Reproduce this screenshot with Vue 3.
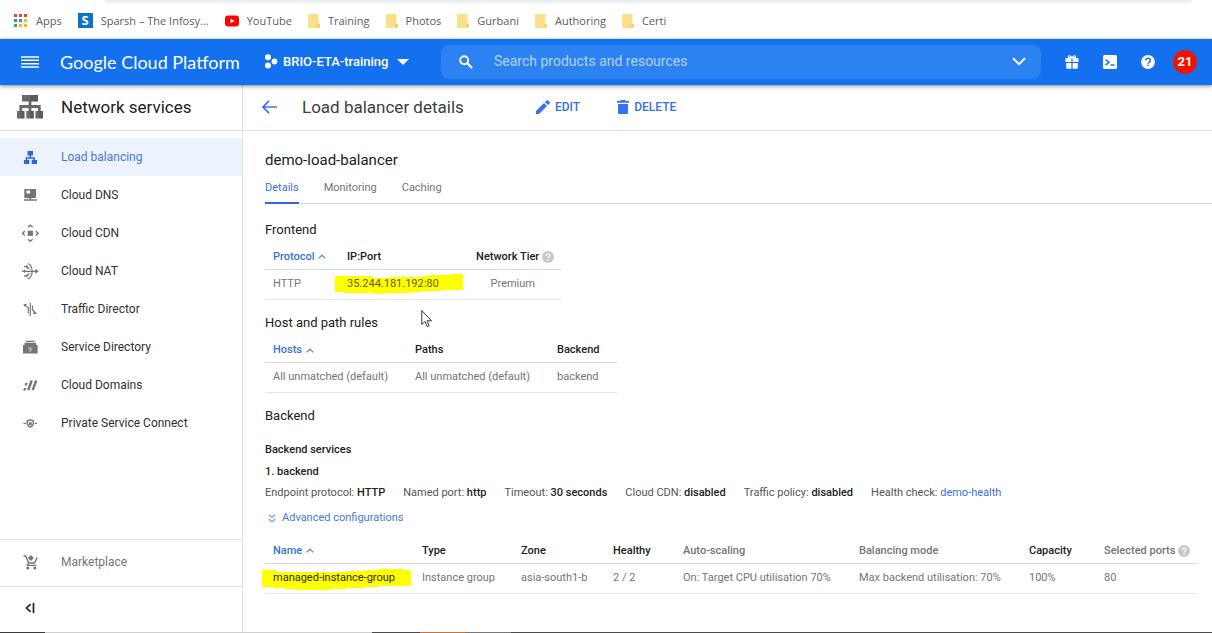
<script setup>
const bookmarks = [
  { label: 'Training' },
  { label: 'Photos' },
  { label: 'Gurbani' },
  { label: 'Authoring' },
  { label: 'Certi' },
]

const services = [
  {
    label: 'Load balancing',
    active: true,
    fill: 'M6.5 3h5.5v4.5H6.5z M3 12h5.3v4H3z M10.7 12H16v4h-5.300z',
    stroke: 'M9.300 7v3 M5.500 12.500V10h7.600v2.500',
    width: 1.6,
  },
  {
    label: 'Cloud DNS',
    fill: 'M3.300 3H15v9H3.300z M5.500 4.500v3h3.600v-3z M8 12h2.300v1.500H8z M3 13.300h13v1.500H3z',
    stroke: '',
    width: 1,
  },
  {
    label: 'Cloud CDN',
    fill: 'M6.700 6.700h5.200v5.200H6.700z',
    stroke: 'M7 3.300l2.300-2 2.300 2 M7 15.200l2.300 2 2.300-2 M3.800 7L1.500 9.300l2.300 2.300 M14.800 7l2.300 2.300-2.300 2.300',
    width: 1.4,
  },
  {
    label: 'Cloud NAT',
    fill: 'M14.300 6.800L17.800 9.300l-3.500 2.500z',
    stroke: 'M1 9.300h14 M7 1.500c5.500 2.500 5.500 13 0 15.500 M3 4.700h3l2.500 2.500 M3 13.900h3l2.500-2.500 M6 3v3.400 M6 12.200v3.400 M3.500 7.800v3',
    width: 1.2,
  },
  {
    label: 'Traffic Director',
    fill: 'M2.500 4h3.500l-2.500 3z',
    stroke: 'M4 5.200l3.300 2.300v6 M9.300 3v13 M11.500 5.500v4.500l3 3 M12 13.300h3.500',
    width: 1.2,
  },
  {
    label: 'Service Directory',
    fill: 'M2 7h14.600v8.500H2z M3.500 4.800h11.600V7H3.500z M5 2.800h8.600v1.200H5z',
    cut: 'M7 10h4.600 M9.300 10v4 M7.500 12h3.600',
    stroke: '',
    width: 1,
  },
  {
    label: 'Cloud Domains',
    fill: 'M4.300 7h2.400l-.8 2.400H3.500z M3 12h2.400l-.8 2.400H2.200z',
    stroke: 'M10.700 4.500l-3.500 9.700 M15.200 4.500l-3.500 9.700',
    width: 2.4,
  },
  {
    label: 'Private Service Connect',
    fill: 'M7.800 8.300h3V11h-3z M2.500 8.700h2.300v1.200H2.500z M13.800 8.700h2.300v1.200h-2.300z',
    stroke: 'M9.300 5.800l3 1v2.700c0 2-1.400 3-3 3.700c-1.600-.7-3-1.700-3-3.700V6.800z',
    width: 1.4,
  },
]

const tabs = ['Details', 'Monitoring', 'Caching']

const facts = [
  { label: 'Endpoint protocol', value: 'HTTP' },
  { label: 'Named port', value: 'http' },
  { label: 'Timeout', value: '30 seconds' },
  { label: 'Cloud CDN', value: 'disabled' },
  { label: 'Traffic policy', value: 'disabled' },
]
</script>

<template>
  <div class="page">
    <div class="omnibox-row"><div class="omnibox"></div></div>
    <nav class="bookmarks" aria-label="Bookmarks">
      <a href="#" class="bm apps">
        <svg width="14" height="14" viewBox="0 0 14 14" aria-hidden="true">
          <path fill="#ea4335" d="M0 0h3v3H0zM5 0h3v3H5zM10 0h3v3h-3z" />
          <path fill="#34a853" d="M0 5h3v3H0zM0 10h3v3H0z" />
          <path fill="#4285f4" d="M5 5h3v3H5z" />
          <path fill="#fbbc05" d="M10 5h3v3h-3zM5 10h3v3H5zM10 10h3v3h-3z" />
        </svg>
        Apps
      </a>
      <a href="#" class="bm sparsh"><span class="sparsh-logo" aria-hidden="true">S</span>Sparsh – The Infosy...</a>
      <a href="#" class="bm youtube">
        <svg width="14" height="12" viewBox="0 0 14 12" aria-hidden="true">
          <rect width="14" height="11" y="0.500" rx="3" fill="#f00" />
          <path d="M5.500 3.700v4.600L9.500 6z" fill="#fff" />
        </svg>
        YouTube
      </a>
      <a v-for="b in bookmarks" :key="b.label" href="#" class="bm folder">
        <svg width="12" height="14" viewBox="0 0 12 14" aria-hidden="true">
          <path d="M1 0h9.500v10H12v2.500a1 1 0 0 1-1 1H1a1 1 0 0 1-1-1V1a1 1 0 0 1 1-1z" fill="#fbdf8b" />
          <path d="M0 13h9v-2.500h3v2a1 1 0 0 1-1 1H1z" fill="#f4cd62" />
        </svg>
        {{ b.label }}
      </a>
    </nav>

    <header class="topbar">
      <button class="icon-btn menu" aria-label="Main menu">
        <svg width="18" height="12" viewBox="0 0 18 12"><path d="M0 1h18M0 4.300h18M0 7.700h18M0 11h18" stroke="#fff" stroke-width="1.500" /></svg>
      </button>
      <a href="#" class="brand">Google Cloud Platform</a>
      <button class="project">
        <svg width="14" height="15" viewBox="0 0 14 15" aria-hidden="true">
          <g fill="#fff"><circle cx="4" cy="3.300" r="3" /><circle cx="4" cy="11.500" r="3" /><circle cx="10.500" cy="7.500" r="2.900" /></g>
        </svg>
        <span>BRIO-ETA-training</span>
        <svg class="caret" width="12" height="6" viewBox="0 0 12 6" aria-hidden="true"><path d="M0 0h12L6 6z" fill="#fff" /></svg>
      </button>
      <div class="search">
        <svg width="14" height="14" viewBox="0 0 14 14" aria-hidden="true">
          <circle cx="5.200" cy="5.200" r="4" fill="none" stroke="#fff" stroke-width="1.900" />
          <path d="M8.300 8.300l4.700 4.700" stroke="#fff" stroke-width="2.300" />
        </svg>
        <input type="text" placeholder="Search products and resources" aria-label="Search products and resources" />
        <button class="icon-btn" aria-label="Show search options">
          <svg width="14" height="9" viewBox="0 0 14 9"><path d="M1 1.200l6 6 6-6" fill="none" stroke="#fff" stroke-width="2" /></svg>
        </button>
      </div>
      <div class="actions">
        <button class="icon-btn" aria-label="Free trial">
          <svg width="14" height="14" viewBox="0 0 14 14">
            <path fill="#fff" d="M.5 3h13v4H7.600V3H6.400v4H.5zM1.200 8h5.200v5.700h-4a1.200 1.200 0 0 1-1.200-1.200zM7.600 8h5.200v4.500a1.200 1.200 0 0 1-1.200 1.200h-4z" />
            <path d="M7 3C5 3 3 2.500 3.500 1.300S6.500 1 7 3c.5-2 3-2.800 3.500-1.700S9 3 7 3z" fill="none" stroke="#fff" stroke-width="1.200" />
          </svg>
        </button>
        <button class="icon-btn" aria-label="Activate Cloud Shell">
          <svg width="14" height="14" viewBox="0 0 14 14">
            <rect width="14" height="14" rx="1.500" fill="#fff" />
            <path d="M2.500 4.500L6 7.300l-3.500 2.800M7.500 10h4" fill="none" stroke="#1a73e8" stroke-width="1.600" />
          </svg>
        </button>
        <button class="icon-btn" aria-label="Help">
          <svg width="14" height="14" viewBox="0 0 14 14">
            <circle cx="7" cy="7" r="6.900" fill="#fff" />
            <path d="M4.800 5.400c0-3 4.500-2.800 4.500-.1 0 1.700-2.200 1.700-2.200 3.500M7.100 9.700v1.600" fill="none" stroke="#1a73e8" stroke-width="1.500" />
          </svg>
        </button>
        <button class="badge" aria-label="21 notifications">21</button>
      </div>
    </header>

    <div class="body">
      <aside class="side">
        <div class="side-title">
          <svg width="26" height="24" viewBox="0 0 26 24" aria-hidden="true">
            <path fill="#6a6a6a" d="M5 0h16v6.500H5zM0 16h7.500v7.500H0zM9.300 16h7.500v7.500H9.300zM18.500 16H26v7.500h-7.500z" />
            <path d="M13 6v10M3.800 16v-4.500h18.500V16" fill="none" stroke="#6a6a6a" stroke-width="2.800" />
            <path d="M13 0h8v6.500h-8zM3.800 16h3.700v7.500H3.800zM13 16h3.800v7.500H13zM22.200 16H26v7.500h-3.800z" fill="#000" opacity=".15" />
          </svg>
          <h2>Network services</h2>
        </div>
        <nav class="side-nav" aria-label="Network services">
          <a v-for="s in services" :key="s.label" href="#" class="side-item" :class="{ active: s.active }">
            <svg width="18" height="18" viewBox="0 0 18 18" aria-hidden="true">
              <path :d="s.fill" fill="currentColor" fill-rule="evenodd" />
              <path v-if="s.stroke" :d="s.stroke" fill="none" stroke="currentColor" :stroke-width="s.width" />
              <path v-if="s.cut" :d="s.cut" fill="none" stroke="#c0c0c0" stroke-width="1" />
            </svg>
            <span>{{ s.label }}</span>
          </a>
        </nav>
        <a href="#" class="market">
          <svg width="18" height="18" viewBox="0 0 18 18" aria-hidden="true">
            <path d="M2.500 3h2.200l3 7h5.800l2.700-5.500M7.500 10l-1.200 2.400h8.900" fill="none" stroke="currentColor" stroke-width="1.400" />
            <path d="M9.900 2l3 3-3 3-3-3z" fill="currentColor" />
            <circle cx="6.800" cy="15" r="1.500" fill="currentColor" /><circle cx="13.800" cy="15" r="1.500" fill="currentColor" />
          </svg>
          <span>Marketplace</span>
        </a>
        <div class="collapse">
          <button class="icon-btn" aria-label="Collapse navigation">
            <svg width="10" height="10" viewBox="0 0 10 10"><path d="M5.500 1.200L1.500 5l4 3.800M8.500 0v10" fill="none" stroke="#202124" stroke-width="1.700" /></svg>
          </button>
        </div>
      </aside>

      <main class="main">
        <div class="toolbar">
          <button class="icon-btn" aria-label="Back">
            <svg width="16" height="14" viewBox="0 0 16 14"><path d="M15 7H1.500M7 .8L.900 7l6.100 6.200" fill="none" stroke="#3b73e8" stroke-width="1.700" /></svg>
          </button>
          <h1>Load balancer details</h1>
          <button class="tool edit">
            <svg width="14" height="14" viewBox="0 0 14 14" aria-hidden="true"><path d="M0 14v-3l8-8 3 3-8 8zM9 2l1.600-1.600a1 1 0 0 1 1.400 0L13.600 2a1 1 0 0 1 0 1.400L12 5z" fill="#3371ee" /></svg>
            EDIT
          </button>
          <button class="tool delete">
            <svg width="12" height="14" viewBox="0 0 12 14" aria-hidden="true"><path d="M3.500 0h5v1H12v1.800H0V1h3.500zM1 4h10v8.700A1.300 1.300 0 0 1 9.700 14H2.300A1.300 1.300 0 0 1 1 12.700z" fill="#3371ee" /></svg>
            DELETE
          </button>
        </div>

        <div class="content">
          <h2 class="name">demo-load-balancer</h2>
          <div class="tabs" role="tablist">
            <button v-for="(t, i) in tabs" :key="t" role="tab" :aria-selected="i === 0" class="tab" :class="{ on: i === 0 }">{{ t }}</button>
          </div>

          <h3>Frontend</h3>
          <table class="frontend">
            <thead>
              <tr>
                <th class="c-proto sorted">Protocol <svg class="sort" width="8" height="5" viewBox="0 0 8 5" aria-hidden="true"><path d="M.7 4.400L4 1.200l3.300 3.200" /></svg></th>
                <th class="c-ip">IP:Port</th>
                <th class="right">Network Tier <svg class="help" width="12" height="12" viewBox="0 0 12 12" aria-hidden="true"><circle cx="6" cy="6" r="6" /><path d="M4.200 4.800c0-2.500 3.600-2.300 3.600-.1C7.800 6.100 6 6.100 6 7.500M6 8.400v1.300" /></svg></th>
              </tr>
            </thead>
            <tbody>
              <tr>
                <td>HTTP</td>
                <td>
                  <span class="marked">
                    <svg class="marker ip" width="128" height="20" viewBox="0 0 128 20" aria-hidden="true"><path d="M0 2h37v2h18V3h31V2h9V1h20V0h13v16h-21v1H86v1H78v1H50v1H38v-1H9v-1H0z" fill="#ff0" /></svg>
                    <span>35.244.181.192:80</span>
                  </span>
                </td>
                <td class="right tier">Premium</td>
              </tr>
            </tbody>
          </table>

          <h3>Host and path rules</h3>
          <table class="hosts">
            <thead>
              <tr>
                <th class="c-host sorted">Hosts <svg class="sort" width="8" height="5" viewBox="0 0 8 5" aria-hidden="true"><path d="M.7 4.400L4 1.200l3.300 3.200" /></svg></th>
                <th class="c-host">Paths</th>
                <th>Backend</th>
              </tr>
            </thead>
            <tbody>
              <tr><td>All unmatched (default)</td><td>All unmatched (default)</td><td>backend</td></tr>
            </tbody>
          </table>

          <h3>Backend</h3>
          <h4 class="services">Backend services</h4>
          <h4>1. backend</h4>
          <div class="facts">
            <span v-for="f in facts" :key="f.label">{{ f.label }}: <b>{{ f.value }}</b></span>
            <span>Health check: <a href="#">demo-health</a></span>
          </div>
          <button class="advanced">
            <svg width="8" height="9" viewBox="0 0 8 9" aria-hidden="true"><path d="M.7 .7L4 3.500 7.300 .7M.7 5L4 7.800 7.300 5" fill="none" stroke="#7b9be6" stroke-width="1.200" /></svg>
            Advanced configurations
          </button>

          <table class="backends">
            <thead>
              <tr>
                <th class="w-name sorted">Name <svg class="sort" width="8" height="5" viewBox="0 0 8 5" aria-hidden="true"><path d="M.7 4.400L4 1.200l3.300 3.200" /></svg></th>
                <th class="w-type">Type</th>
                <th class="w-zone">Zone</th>
                <th class="w-health">Healthy</th>
                <th class="w-auto soft">Auto-scaling</th>
                <th class="w-mode soft">Balancing mode</th>
                <th class="w-cap">Capacity</th>
                <th class="w-ports soft">Selected ports <svg class="help" width="12" height="12" viewBox="0 0 12 12" aria-hidden="true"><circle cx="6" cy="6" r="6" /><path d="M4.200 4.800c0-2.500 3.600-2.300 3.600-.1C7.800 6.100 6 6.100 6 7.500M6 8.400v1.300" /></svg></th>
              </tr>
            </thead>
            <tbody>
              <tr>
                <td>
                  <span class="marked group">
                    <svg class="marker name-mark" width="149" height="21" viewBox="0 0 149 21" aria-hidden="true"><path d="M0 1h14v2h70V2h21V1h12V0h25v1h7v16h-31v1h-15v1H84v1H68v1H34v-1H22v-1H11v-1H0z" fill="#ff0" /></svg>
                    <span>managed-instance-group</span>
                  </span>
                </td>
                <td>Instance group</td>
                <td>asia-south1-b</td>
                <td>2 / 2</td>
                <td>On: Target CPU utilisation 70%</td>
                <td>Max backend utilisation: 70%</td>
                <td>100%</td>
                <td>80</td>
              </tr>
            </tbody>
          </table>
        </div>
      </main>
    </div>

    <div class="strip"><i class="s1"></i><i class="s2"></i><i class="s3"></i><i class="s4"></i><i class="s5"></i><i class="s6"></i></div>

    <svg class="cursor" width="12" height="19" viewBox="0 0 12 19" aria-hidden="true">
      <path d="M.8 1.500v14l3.200-3 2.200 5.200 2-.9-2.200-5h4.500z" fill="#fff" stroke="#333" stroke-width="1" />
    </svg>
  </div>
</template>

<style>
body {
  background: #fff;
}
</style>

<style scoped>
* {
  box-sizing: border-box;
}
.page {
  position: relative;
  min-height: 100vh;
  display: flex;
  flex-direction: column;
  font-family: Roboto, "Liberation Sans", sans-serif;
  font-size: 11px;
  color: #212121;
}
a {
  text-decoration: none;
  color: #3b6fdb;
}
button {
  font: inherit;
  border: 0;
  background: none;
  padding: 0;
  cursor: pointer;
}
h1, h2, h3, h4 {
  margin: 0;
  font-weight: 400;
}
svg {
  display: block;
  flex: none;
}
.omnibox-row {
  height: 4px;
  padding: 0 20px 0 105px;
}
.omnibox {
  height: 3px;
  background: #eceff1;
  border-radius: 0 0 12px 12px;
}
.bookmarks {
  height: 35px;
  display: flex;
  align-items: center;
  padding: 0 0 2px 14px;
  font-family: "Open Sans", "Noto Sans", sans-serif;
  font-size: 11px;
  white-space: nowrap;
}
.bm {
  display: flex;
  align-items: center;
  color: #5a5d61;
  margin-right: 16px;
  gap: 8px;
}
.sparsh-logo {
  width: 15px;
  height: 15px;
  background: #0b74c4;
  color: #fff;
  font-weight: 700;
  font-size: 13px;
  line-height: 15px;
  text-align: center;
}
.topbar {
  position: relative;
  height: 46px;
  flex: none;
  display: flex;
  align-items: center;
  background: #1371f0;
  box-shadow: 0 1px 4px rgba(0, 0, 0, 0.5);
  color: #fff;
  padding: 0 0 1px 21px;
}
.icon-btn {
  display: flex;
  align-items: center;
  justify-content: center;
  flex: none;
}
.brand {
  color: #fff;
  font-family: Lato, sans-serif;
  font-size: 18px;
  width: 204px;
  margin-left: 21px;
  white-space: nowrap;
}
.project {
  color: #fff;
  display: flex;
  align-items: center;
  gap: 5px;
  font-size: 13px;
  font-weight: 500;
  width: 177px;
  white-space: nowrap;
}
.caret {
  margin-left: 4px;
}
.search {
  flex: 1;
  height: 34px;
  display: flex;
  align-items: center;
  background: #2d82f2;
  border-radius: 8px;
  padding: 0 15px 0 18px;
}
.search input {
  flex: 1;
  min-width: 0;
  border: 0;
  outline: 0;
  background: none;
  font: inherit;
  font-size: 14px;
  color: #fff;
  padding: 0 0 2px;
  margin-left: 21px;
}
.search input::placeholder {
  color: #b5d2fb;
  opacity: 1;
}
.actions {
  display: flex;
  align-items: center;
  gap: 24px;
  padding: 0 15px 0 24px;
}
.badge {
  width: 24px;
  height: 24px;
  margin-left: -6px;
  border-radius: 50%;
  background: #f01400;
  color: #fff;
  font-size: 13px;
  font-weight: 700;
  line-height: 24px;
}
.body {
  flex: 1;
  display: flex;
}
.side {
  width: 243px;
  flex: none;
  border-right: 1px solid #e0e0e0;
  display: flex;
  flex-direction: column;
}
.side-title {
  height: 46px;
  display: flex;
  align-items: center;
  gap: 18px;
  padding: 0 0 2px 17px;
  border-bottom: 1px solid #e0e0e0;
}
.side-title h2,
.toolbar h1 {
  font-size: 17px;
  line-height: 24px;
  white-space: nowrap;
}
.side-nav {
  flex: 1;
  padding-top: 7px;
}
.side-item,
.market {
  display: flex;
  align-items: center;
  gap: 22px;
  height: 38px;
  padding-left: 21px;
  font-size: 12px;
  color: #757575;
}
.side-item span {
  color: #303134;
}
.side-item.active {
  background: #edf3fe;
  color: #2f66d6;
}
.side-item.active span {
  color: #4a77d8;
}
.market {
  height: 47px;
  padding-bottom: 2px;
  border-top: 1px solid #e0e0e0;
}
.collapse {
  height: 46px;
  border-top: 1px solid #e0e0e0;
  display: flex;
  align-items: center;
  padding: 0 0 3px 25px;
}
.main {
  flex: 1;
  min-width: 0;
}
.toolbar {
  height: 46px;
  display: flex;
  align-items: center;
  padding: 0 0 2px 19px;
  border-bottom: 1px solid #e0e0e0;
}
.toolbar h1 {
  margin-left: 24px;
  width: 234px;
  color: #3c4043;
}
.tool {
  display: flex;
  align-items: center;
  gap: 5px;
  font-size: 12px;
  font-weight: 500;
  line-height: 20px;
  color: #3b6fdb;
}
.delete {
  margin-left: 37px;
}
.content {
  padding: 17px 14px 34px 22px;
}
.name {
  font-size: 15px;
  line-height: 24px;
}
.tabs {
  display: flex;
  gap: 25px;
  margin-right: -14px;
  border-bottom: 1px solid #d5d5d5;
}
.tab {
  height: 32px;
  line-height: 32px;
  margin-bottom: -1px;
  border-bottom: 2px solid transparent;
  color: #757575;
}
.tab.on {
  color: #3b6fdb;
  border-bottom-color: #3367d6;
}
h3 {
  font-size: 13px;
  line-height: 20px;
  margin-top: 13px;
  margin-bottom: 3px;
}
.tabs + h3 {
  margin-top: 16px;
  margin-bottom: 2px;
}
table {
  border-collapse: collapse;
  table-layout: fixed;
}
th,
td {
  padding: 0 0 0 8px;
  text-align: left;
  white-space: nowrap;
}
th {
  height: 27px;
  padding-top: 2px;
  font-weight: 500;
  border-bottom: 1px solid #d8d8d8;
}
td {
  height: 30px;
  padding-bottom: 2px;
  color: #757575;
  border-bottom: 1px solid #e8e8e8;
}
th.sorted {
  color: #3b6fdb;
}
th.soft {
  color: #757575;
}
.sort,
.help {
  display: inline-block;
  vertical-align: middle;
}
.sort {
  margin-left: 1px;
}
.sort path {
  fill: none;
  stroke: #5c8ae0;
  stroke-width: 1.3;
}
.help circle {
  fill: #c9c9c9;
}
.help path {
  fill: none;
  stroke: #fff;
  stroke-width: 1.2;
}
.frontend {
  width: 296px;
}
.hosts {
  width: 352px;
}
.backends {
  width: 100%;
  margin-top: 8px;
}
.c-proto {
  width: 74px;
}
.c-ip {
  width: 120px;
}
.c-host {
  width: 142px;
}
.w-name { width: 149px; }
.w-type { width: 99px; }
.w-zone { width: 92px; }
.w-health { width: 70px; }
.w-auto { width: 176px; }
.w-mode { width: 170px; }
.w-cap { width: 75px; }
.w-ports { width: 102px; }
.right {
  text-align: right;
  padding-right: 7px;
}
.tier {
  padding-right: 26px;
}
.marked {
  position: relative;
  display: inline-block;
}
.marked span {
  position: relative;
  color: #5f6110;
}
.marked.group span {
  color: #2b2c00;
}
.marker {
  position: absolute;
}
.ip {
  left: -12px;
  top: -3px;
}
.name-mark {
  left: -11px;
  top: -2px;
}
h4 {
  font-size: 11px;
  line-height: 22px;
  font-weight: 500;
}
.services {
  margin-top: 13px;
}
.facts {
  display: flex;
  gap: 18px;
  line-height: 20px;
  white-space: nowrap;
  color: #555;
}
.facts b {
  font-weight: 500;
  color: #212121;
}
.advanced {
  display: flex;
  align-items: center;
  gap: 6px;
  margin-top: 5px;
  padding-left: 3px;
  line-height: 20px;
  color: #4a77d8;
}
.strip {
  height: 1px;
  display: flex;
}
.s1 { width: 45px; background: #3a3a3a; }
.s2 { width: 327px; background: #cfcfcf; }
.s3 { width: 48px; background: #4a4a4a; }
.s4 { width: 45px; background: #c8743a; }
.s5 { width: 46px; background: #777; }
.s6 { flex: 1; background: #4a4a4a; }
.cursor {
  position: absolute;
  left: 421px;
  top: 309px;
}
</style>
